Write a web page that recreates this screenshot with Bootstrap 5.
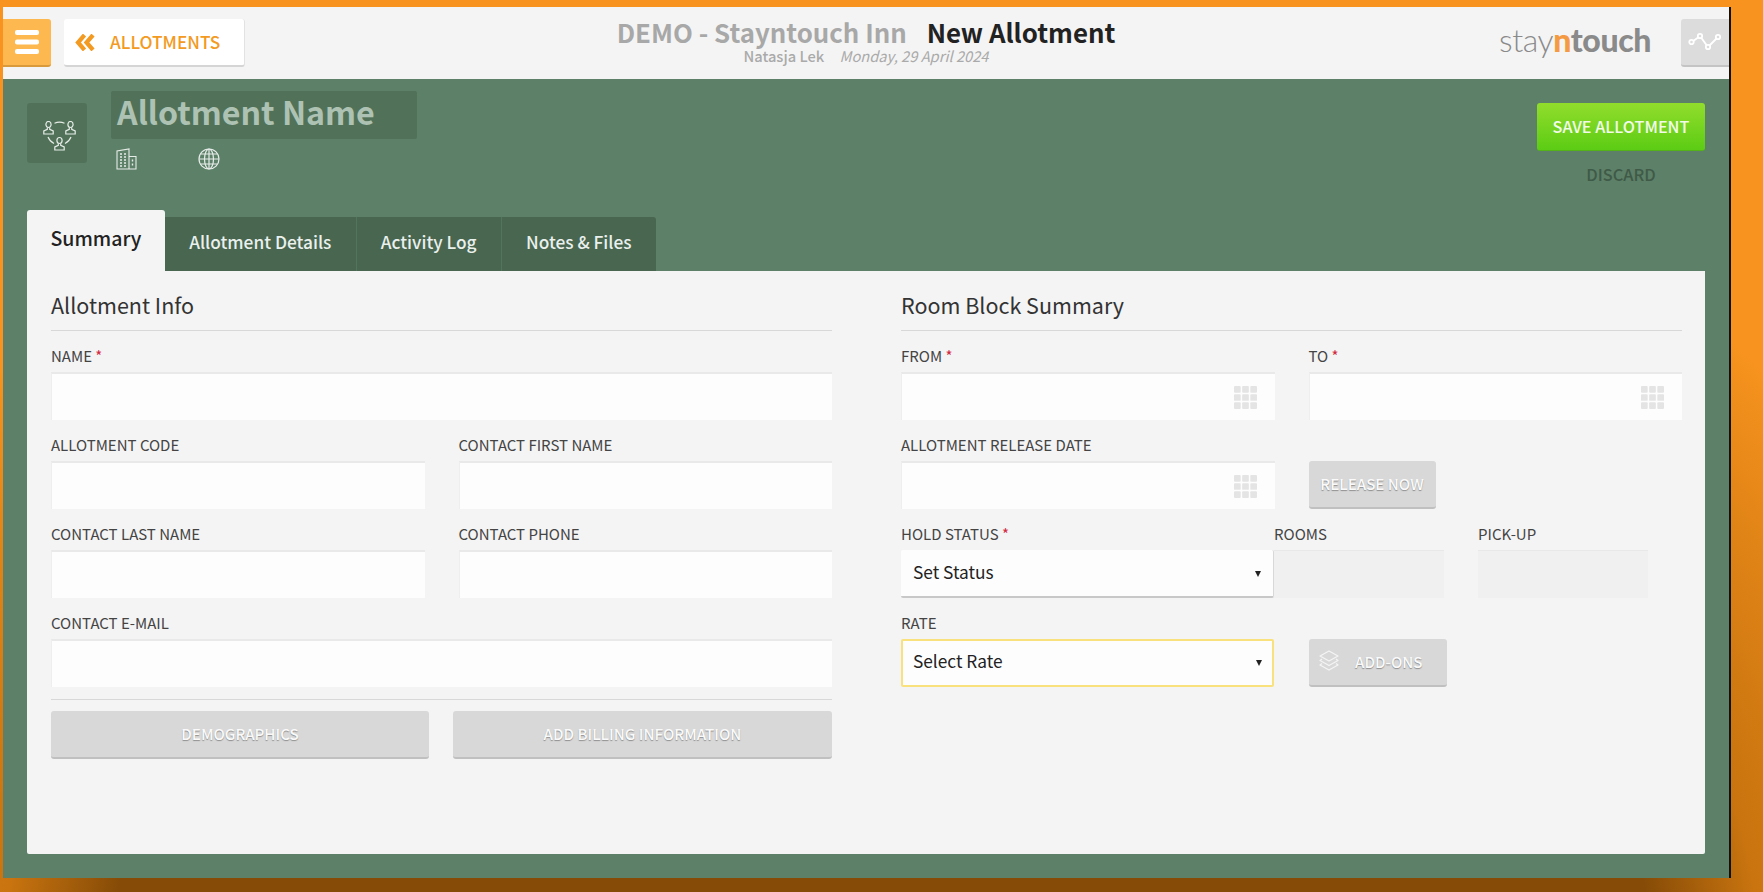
<!DOCTYPE html>
<html lang="en">
<head>
<meta charset="utf-8">
<title>New Allotment</title>
<link href="https://cdn.jsdelivr.net/npm/bootstrap@5.3.0/dist/css/bootstrap.min.css" rel="stylesheet">
<style>
html,body{height:892px;overflow:hidden}
body{margin:0;font-family:"Noto Sans CJK SC","Noto Sans",sans-serif;background:radial-gradient(ellipse 1100px 900px at 50% 981px,#854b07 0,#854b07 70%,#c9740f 80%,#f7931e 105%);color:#333}
.stage{padding:7px 0 0 3px;width:1732px}
.app{width:1728px;height:871px;border-right:2px solid #111;background:#5d8068;display:flex;flex-direction:column}
.topbar{height:72px;background:#f4f4f4;position:relative;flex:none}
.burger{width:48px;height:48px;margin-top:12px;background:#fdb94f;border:0;border-bottom:2px solid #d99a3c;border-radius:0 3px 3px 0;padding:0;flex:none}
.backbtn{width:181px;height:48px;margin:12px 0 0 13px;background:#fff;border:0;border-bottom:2px solid #d5d5d5;border-right:1px solid #e2e2e2;border-radius:3px;color:#f39a22;font-size:17.3px;font-weight:500;line-height:24px;padding:0 0 0 11px;gap:15px;flex:none}
.heading{position:absolute;left:0;width:1726px;top:8px;text-align:center;line-height:1}
.h-main{font-size:25.8px;line-height:33px;font-weight:700;color:#a8a8a8;display:block;white-space:nowrap}
.h-main b{color:#222;margin-left:14px;font-weight:700}
.h-sub{font-size:14.7px;line-height:15px;display:block;color:#aaa;font-weight:500}
.h-sub i{font-weight:400;margin-left:12px}
.brand{font-family:Lato,sans-serif;font-size:32px;line-height:40px;color:#8a8a8a;font-weight:300;letter-spacing:-.4px;margin:13px 30px 0 0}
.brand b{font-weight:900}.brand em{font-style:normal;font-weight:900;color:#f49a42}
.trendbtn{width:48px;height:48px;margin-top:12px;background:#dcdcdc;border:0;border-bottom:2px solid #c4c4c4;border-radius:3px 0 0 3px;padding:0;flex:none}
.ident{height:131px;padding:12px 24px 0 24px;flex:none}
.grp-icon{width:60px;height:60px;margin-top:12px;background:#517259;border-radius:3px;flex:none;padding:18px 0 0 16px}
.grp-icon svg{display:block}
.name-block{margin-left:24px;width:306px}
.name-box{height:48px;background:#517259;border-radius:2px;padding:0 6px;font-size:32.2px;line-height:41px;font-weight:700;color:#aec2b4}
.sub-icons{gap:61px;padding:9px 0 0 5px}
.save-col{width:168px;margin-top:12px}
.savebtn{width:168px;height:48px;background:linear-gradient(180deg,#92dd2c,#5ccc14);border:0;border-radius:3px;color:#f2fbe9;font-size:16.2px;line-height:24px;font-weight:500;padding:0 0 2px;border-bottom:1px solid #55b319}
.discard{margin-top:11px;text-align:center;font-size:16.4px;line-height:24px;color:#3f5a47;font-weight:500}
.tabstrip{margin:0 0 0 24px;height:61px;flex:none;align-items:flex-end;border:0}
.tabstrip .nav-link{height:54px;margin:0;padding:0 24.200px;background:#486650;color:#eaf0ec;font-size:17.3px;line-height:49px;font-weight:500;border:0;border-right:1px solid #557460;border-radius:0}
.tabstrip .nav-item:last-child .nav-link{border-radius:0 3px 0 0;border-right:0}
.tabstrip .nav-link.active{height:61px;width:138px;padding:0;text-align:center;background:#f4f4f4;color:#222;font-size:19.5px;line-height:56px;border-radius:3px 3px 0 0;border-right:0}
.sheet{height:583px;width:1678px;margin-left:24px;background:#f4f4f4;border:0;border-radius:0 0 2px 2px;padding:0 23px 0 24px;flex:none}
.sheet>.row{--bs-gutter-x:69px}
.sect-title{font-size:21.5px;line-height:30px;font-weight:400;color:#333;margin:0;padding-top:19px;height:60px;border-bottom:1px solid #d8d8d8}
.fields{--bs-gutter-x:34px;--bs-gutter-y:0}
.fld{padding-top:15px}
.fld-label{display:block;height:20px;line-height:20px;margin:0 0 6px;font-size:15px;color:#444;white-space:nowrap}
.fld-label span{color:#d2283c}
.fld-input{display:block;width:100%;height:48px;background:#fdfdfd;border:0;border-top:2px solid #e9e9e9;border-left:1px solid #eee;border-radius:0;padding:0 12px;position:relative}
.cal{position:absolute;right:18px;top:12px}
.line-sep{height:1px;background:#d8d8d8;margin-top:12px}
.greybtn{background:#d8d8d8;color:#fafafa;border:0;border-bottom:2px solid #c0c0c0;border-radius:3px;height:48px;font-size:15.1px;line-height:24px;font-weight:500;padding:0 0 3px;text-shadow:0 1px 1px #8f8f8f}
.btn-pair{gap:24px;margin-top:11px}
.btn-pair .greybtn:first-child{width:378px}.btn-pair .greybtn:last-child{width:379px}
.relbtn{width:127px;margin-top:26px;margin-left:0}
.sel-line{align-items:flex-start}
.selbox{height:48px;background:#fdfdfd;border:0;border-bottom:2px solid #c8c8c8;border-right:1px solid #d8d8d8;border-radius:2px;font-size:17.3px;line-height:43px;color:#222;padding:0 12px;position:relative}
.selbox::after{content:"";position:absolute;right:12px;top:21px;border:3.5px solid transparent;border-top:6px solid #222;border-bottom:0}
.sel-main{width:373px;flex:none}
.sel-rate-wrap{width:373px;flex:none}
.sel-rate{border:2px solid #f9e27d;line-height:40px;padding:0 10px;border-radius:2px}
.sel-rate::after{right:10px;top:19px}
.stat-a{width:170px;flex:none}
.stat-b{width:170px;flex:none;margin-left:34px}
.stat-box{height:48px;background:#f0f0f0;border-top:1px solid #e8e8e8}
.addbtn{width:138px;margin-left:35px;margin-top:41px;gap:16px;padding:0 0 3px 10px}
.addrow{align-items:flex-start}
</style>
</head>
<body>
<div class="stage">
<div class="app">
  <header class="topbar d-flex align-items-start">
    <button class="burger btn d-flex align-items-center justify-content-center" type="button" aria-label="Menu">
      <svg width="26" height="26" viewBox="0 0 26 26"><g fill="#fff"><rect x="1" y="1" width="24" height="5" rx="2"/><rect x="1" y="10.500" width="24" height="5" rx="2"/><rect x="1" y="20" width="24" height="5" rx="2"/></g></svg>
    </button>
    <button class="backbtn btn d-flex align-items-center" type="button">
      <svg width="20" height="17" viewBox="0 0 20 17"><g fill="none" stroke="#f39a22" stroke-width="4.200"><path d="M9.500 1 3 8.500 9.500 16"/><path d="M18 1 11.500 8.500 18 16"/></g></svg>
      <span>ALLOTMENTS</span>
    </button>
    <div class="heading">
      <span class="h-main">DEMO - Stayntouch Inn <b>New Allotment</b></span>
      <span class="h-sub">Natasja Lek <i>Monday, 29 April 2024</i></span>
    </div>
    <div class="ms-auto brand">stay<em>n</em><b>touch</b></div>
    <button class="trendbtn btn d-flex align-items-center justify-content-center" type="button" aria-label="Activity">
      <svg width="34" height="22" viewBox="0 0 34 22"><g fill="none" stroke="#fff" stroke-width="1.800"><path d="M4 11 12 5l8 11 10-10"/><circle cx="3.500" cy="11" r="2.200" fill="#dcdcdc"/><circle cx="12" cy="5" r="2.200" fill="#dcdcdc"/><circle cx="20" cy="16" r="2.200" fill="#dcdcdc"/><circle cx="30" cy="6" r="2.200" fill="#dcdcdc"/></g></svg>
    </button>
  </header>

  <section class="ident d-flex align-items-start">
    <div class="grp-icon">
      <svg width="33" height="30" viewBox="0 0 33 30"><g fill="none" stroke="#e6ece8" stroke-width="1.200"><path d="M11.500 2.200a13 13 0 0 1 10 0"/><path d="M5 16c1 2.500 3 5 6 6.500"/><path d="M28 16c-1 2.500-3 5-6 6.500"/><ellipse cx="5.500" cy="3.500" rx="2.600" ry="3"/><path d="M4.300 6.500v1.800L.8 10v3h9.400v-3L6.700 8.300V6.500"/><ellipse cx="27.500" cy="3.500" rx="2.600" ry="3"/><path d="M26.300 6.500v1.800L22.800 10v3h9.400v-3l-3.500-1.700V6.500"/><ellipse cx="16.500" cy="19.500" rx="2.600" ry="3"/><path d="M15.300 22.500v1.800L11.800 26v3h9.400v-3l-3.500-1.700v-1.800"/></g></svg>
    </div>
    <div class="name-block">
      <div class="name-box">Allotment Name</div>
      <div class="sub-icons d-flex">
        <svg width="21" height="22" viewBox="0 0 21 22"><g fill="none" stroke="#e6ece8" stroke-width="1.100"><path d="M1 21V3L13 1v20zM13 8.500h7V21h-7M1 21h19"/><path d="M4 6h2M8 6h2M4 9h2M8 9h2M4 12h2M8 12h2M4 15h2M8 15h2M4 18h2M8 18h2" stroke-width="1.500"/><path d="M16.500 11.500v2M16.500 15.500v2" stroke-width="1.400"/></g></svg>
        <svg width="22" height="22" viewBox="0 0 22 22"><g fill="none" stroke="#e6ece8" stroke-width="1.200"><circle cx="11" cy="11" r="10"/><ellipse cx="11" cy="11" rx="4.500" ry="10"/><path d="M11 1v20M1 11h20M2.500 6h17M2.500 16h17"/></g></svg>
      </div>
    </div>
    <div class="save-col ms-auto">
      <button class="savebtn btn" type="button">SAVE ALLOTMENT</button>
      <div class="discard">DISCARD</div>
    </div>
  </section>

  <ul class="nav nav-tabs tabstrip">
    <li class="nav-item"><a class="nav-link active" href="#">Summary</a></li>
    <li class="nav-item"><a class="nav-link" href="#">Allotment Details</a></li>
    <li class="nav-item"><a class="nav-link" href="#">Activity Log</a></li>
    <li class="nav-item"><a class="nav-link" href="#">Notes &amp; Files</a></li>
  </ul>

  <main class="sheet card">
    <div class="row">
      <div class="col-6">
        <h2 class="sect-title">Allotment Info</h2>
        <div class="fld"><label class="fld-label">NAME <span>*</span></label><div class="fld-input"></div></div>
        <div class="row fields">
          <div class="col-6 fld"><label class="fld-label">ALLOTMENT CODE</label><div class="fld-input"></div></div>
          <div class="col-6 fld"><label class="fld-label">CONTACT FIRST NAME</label><div class="fld-input"></div></div>
          <div class="col-6 fld"><label class="fld-label">CONTACT LAST NAME</label><div class="fld-input"></div></div>
          <div class="col-6 fld"><label class="fld-label">CONTACT PHONE</label><div class="fld-input"></div></div>
        </div>
        <div class="fld"><label class="fld-label">CONTACT E-MAIL</label><div class="fld-input"></div></div>
        <div class="line-sep"></div>
        <div class="d-flex btn-pair">
          <button class="greybtn btn" type="button">DEMOGRAPHICS</button>
          <button class="greybtn btn" type="button">ADD BILLING INFORMATION</button>
        </div>
      </div>
      <div class="col-6">
        <h2 class="sect-title">Room Block Summary</h2>
        <div class="row fields">
          <div class="col-6 fld"><label class="fld-label">FROM <span>*</span></label><div class="fld-input"><svg class="cal" width="23" height="23" viewBox="0 0 24 24"><use href="#gridicon"/></svg></div></div>
          <div class="col-6 fld"><label class="fld-label">TO <span>*</span></label><div class="fld-input"><svg class="cal" width="23" height="23" viewBox="0 0 24 24"><use href="#gridicon"/></svg></div></div>
          <div class="col-6 fld"><label class="fld-label">ALLOTMENT RELEASE DATE</label><div class="fld-input"><svg class="cal" width="23" height="23" viewBox="0 0 24 24"><use href="#gridicon"/></svg></div></div>
          <div class="col-6 fld"><button class="greybtn btn relbtn" type="button">RELEASE NOW</button></div>
        </div>
        <div class="d-flex sel-line">
          <div class="fld sel-main"><label class="fld-label">HOLD STATUS <span>*</span></label><div class="selbox">Set Status</div></div>
          <div class="fld stat-a"><label class="fld-label">ROOMS</label><div class="stat-box"></div></div>
          <div class="fld stat-b"><label class="fld-label">PICK-UP</label><div class="stat-box"></div></div>
        </div>
        <div class="d-flex addrow">
          <div class="fld sel-rate-wrap"><label class="fld-label">RATE</label><div class="selbox sel-rate">Select Rate</div></div>
          <button class="greybtn btn addbtn d-flex align-items-center" type="button">
            <svg width="20" height="24" viewBox="0 0 20 24"><g fill="none" stroke="#f4f4f4" stroke-width="1.300" stroke-linejoin="round"><path d="M10 2 19 7l-9 5-9-5z"/><path d="M3 10 1 11.500l9 5 9-5L17 10"/><path d="M3 14.500 1 16l9 5 9-5-2-1.500"/></g></svg>
            <span>ADD-ONS</span>
          </button>
        </div>
      </div>
    </div>
  </main>
</div>
</div>
<svg width="0" height="0" class="position-absolute"><defs><g id="gridicon" fill="#e4e4e4"><rect x="0" y="0" width="7" height="7" rx="1"/><rect x="8.500" y="0" width="7" height="7" rx="1"/><rect x="17" y="0" width="7" height="7" rx="1"/><rect x="0" y="8.500" width="7" height="7" rx="1"/><rect x="8.500" y="8.500" width="7" height="7" rx="1"/><rect x="17" y="8.500" width="7" height="7" rx="1"/><rect x="0" y="17" width="7" height="7" rx="1"/><rect x="8.500" y="17" width="7" height="7" rx="1"/><rect x="17" y="17" width="7" height="7" rx="1"/></g></defs></svg>
<script src="https://cdn.jsdelivr.net/npm/bootstrap@5.3.0/dist/js/bootstrap.bundle.min.js"></script>
</body>
</html>
